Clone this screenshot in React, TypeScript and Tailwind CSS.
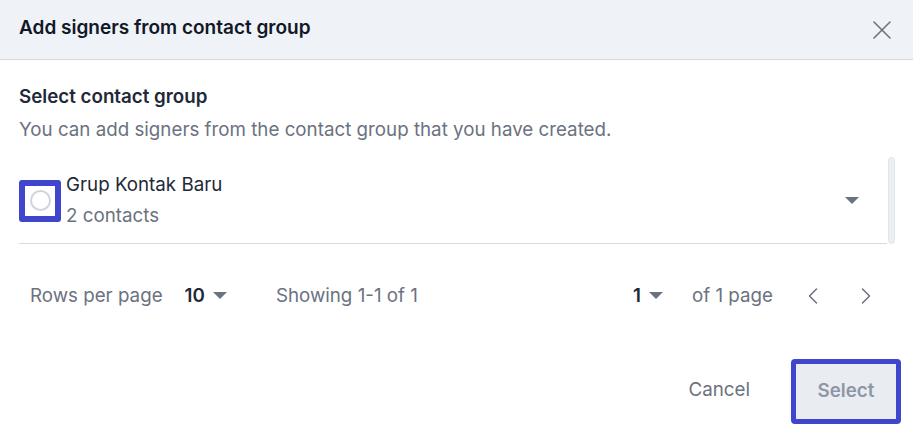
import { ChevronLeft, ChevronRight } from "lucide-react";

function Caret({ className = "" }: { className?: string }) {
  return (
    <svg width="14" height="8" viewBox="0 0 14 8" className={className}>
      <path d="M0 0h14L7 7z" fill="#6b7280" />
    </svg>
  );
}

export default function App() {
  return (
    <div className="w-[913px] h-[440px] bg-white font-['Inter',sans-serif] overflow-hidden">
      {/* header */}
      <div className="h-[60px] bg-[#eff2f7] border-b border-[#d5d9e0] flex items-center justify-between pl-[19px] pr-[22px] pb-[3px]">
        <h2 className="text-[19px] font-semibold text-[#111827]">Add signers from contact group</h2>
        <svg width="18" height="18" viewBox="0 0 18 18" className="mt-[4px]">
          <path d="M1 1l16 16M17 1L1 17" stroke="#6b7280" strokeWidth="1.6" strokeLinecap="round" />
        </svg>
      </div>

      {/* body */}
      <div className="pl-[19px] pr-[18px] pt-[24px]">
        <div className="text-[18.75px] font-semibold text-[#1f2937] leading-[26px]">Select contact group</div>
        <div className="text-[18.75px] text-[#6b7280] leading-[26px] mt-[7px]">
          You can add signers from the contact group that you have created.
        </div>

        <div className="mt-[14px] flex">
          <div className="flex-1 h-[87px] border-b border-[#d8dbe2] flex items-center">
            <div className="w-[42px] h-[42px] rounded-[3px] border-[6px] border-[#4046cc] flex items-center justify-center bg-white mt-[1px]">
              <div className="w-[21px] h-[21px] rounded-full border-2 border-[#d1d5db]" />
            </div>
            <div className="ml-[5px] flex flex-col">
              <span className="text-[18.75px] text-[#1f2937] leading-[26px]">Grup Kontak Baru</span>
              <span className="text-[18.75px] text-[#6b7280] leading-[26px] mt-[5px]">2 contacts</span>
            </div>
            <Caret className="ml-auto mr-[28px] mt-[2px]" />
          </div>
          <div className="w-[7px] h-[87px] ml-[1px] rounded-full bg-[#eceff2] border border-[#e2e5e9]" />
        </div>

        {/* pagination */}
        <div className="mt-[38px] flex items-center text-[18.75px] text-[#6b7280] h-[28px]">
          <span className="ml-[11px]">Rows per page</span>
          <span className="ml-[22px] font-semibold text-[#1f2937]">10</span>
          <Caret className="ml-[8px]" />
          <span className="ml-[49px]">Showing 1-1 of 1</span>
          <span className="ml-auto font-semibold text-[#1f2937]">1</span>
          <Caret className="ml-[8px]" />
          <span className="ml-[29px]">of 1 page</span>
          <ChevronLeft className="ml-[26px] w-[28px] h-[28px] text-[#6b7280]" strokeWidth={1.3} />
          <ChevronRight className="ml-[25px] mr-[15px] w-[28px] h-[28px] text-[#6b7280]" strokeWidth={1.3} />
        </div>

        {/* footer */}
        <div className="mt-[53px] flex items-center justify-end">
          <button className="text-[18.75px] text-[#6b7280] mr-[41px] mt-[-6px]">Cancel</button>
          <button className="w-[110px] h-[65px] -mr-[6px] mt-[-4px] rounded-[4px] border-[5px] border-[#4046cc] bg-[#e9ecf0] text-[18.75px] font-semibold text-[#8d97a6]">
            Select
          </button>
        </div>
      </div>
    </div>
  );
}
